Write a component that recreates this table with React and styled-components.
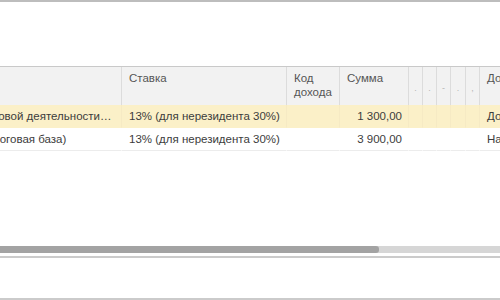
import React, {useLayoutEffect, useRef} from 'react'
import styled, {createGlobalStyle} from 'styled-components'

const GlobalStyle = createGlobalStyle`
  html, body {
    margin: 0;
    padding: 0;
    background: #fff;
  }
  body {
    font-family: 'Liberation Sans', Arial, sans-serif;
    font-size: 11.5px;
    color: #404040;
  }
`

const Page = styled.div`
  width: 500px;
  height: 300px;
  display: flex;
  flex-direction: column;
  overflow: hidden;
  border-top: 2px solid #bdbdbd;
  box-sizing: border-box;
`

const Toolbar = styled.div`
  height: 64px;
  flex: none;
`

const Viewport = styled.div`
  flex: 1;
  overflow-x: auto;
  overflow-y: hidden;
  scrollbar-width: none;
  &::-webkit-scrollbar {
    display: none;
  }
`

// widths of the tabular section columns, px
const columns = [262, 165, 53, 69, 14, 14, 14, 15, 14, 150]

const Grid = styled.div`
  display: grid;
  grid-template-columns: ${columns.map(w => `${w}px`).join(' ')};
  width: max-content;
  border-top: 1px solid #c9c9c9;
`

const HeadCell = styled.div`
  height: 38px;
  box-sizing: border-box;
  padding: 4px 6px 0 7px;
  background: #f2f2f2;
  border-right: 1px solid #dcdcdc;
  color: #555;
  line-height: 14px;
  overflow: hidden;
  text-align: ${p => (p.$center ? 'center' : 'left')};
  ${p => p.$center && 'padding: 14px 0 0; color: #b5b5b5; font-size: 9px;'}
`

const Cell = styled.div`
  height: 23px;
  box-sizing: border-box;
  padding: 0 6px 0 7px;
  line-height: 23px;
  white-space: nowrap;
  overflow: hidden;
  background: ${p => (p.$current ? '#fbf0c8' : '#fff')};
  border-right: 1px solid ${p => (p.$current ? '#f6eac4' : '#fff')};
  border-bottom: 1px solid ${p => (p.$current ? '#fbf0c8' : '#ececec')};
  text-align: ${p => (p.$right ? 'right' : 'left')};
  color: #3c3c3c;
`

const ScrollTrack = styled.div`
  height: 7px;
  flex: none;
  background: #d6d6d6;
  display: flex;
`

const ScrollThumb = styled.div`
  background: #a3a3a3;
  border-radius: 0 3px 3px 0;
`

const Footer = styled.div`
  flex: none;
  height: 40px;
  margin-top: 3px;
  border-top: 2px solid #cbcbcb;
  border-bottom: 2px solid #cbcbcb;
`

const header = [
  {text: 'Вид дохода'},
  {text: 'Ставка'},
  {text: ['Код', 'дохода']},
  {text: 'Сумма'},
  {text: '.', center: true},
  {text: '.', center: true},
  {text: '-', center: true},
  {text: '.', center: true},
  {text: ',', center: true},
  {text: 'Доход'}
]

const rows = [
  {
    kind: 'Прочие выплаты от трудовой деятельности…',
    rate: '13% (для нерезидента 30%)',
    code: '',
    sum: '1 300,00',
    note: 'Доход',
    current: true
  },
  {
    kind: 'Облагаемые суммы (налоговая база)',
    rate: '13% (для нерезидента 30%)',
    code: '',
    sum: '3 900,00',
    note: 'Налоговая база'
  }
]

const App = () => {
  const viewport = useRef(null)

  useLayoutEffect(() => {
    if (viewport.current) viewport.current.scrollLeft = 140
  }, [])

  return (
    <>
      <GlobalStyle />
      <Page>
        <Toolbar />
        <Viewport ref={viewport}>
          <Grid>
            {header.map((h, i) => (
              <HeadCell key={i} $center={h.center}>
                {Array.isArray(h.text) ? h.text.map(t => <div key={t}>{t}</div>) : h.text}
              </HeadCell>
            ))}
            {rows.map((r, i) => (
              <React.Fragment key={i}>
                <Cell $current={r.current}>{r.kind}</Cell>
                <Cell $current={r.current}>{r.rate}</Cell>
                <Cell $current={r.current}>{r.code}</Cell>
                <Cell $current={r.current} $right>
                  {r.sum}
                </Cell>
                <Cell $current={r.current} />
                <Cell $current={r.current} />
                <Cell $current={r.current} />
                <Cell $current={r.current} />
                <Cell $current={r.current} />
                <Cell $current={r.current}>{r.note}</Cell>
              </React.Fragment>
            ))}
          </Grid>
        </Viewport>
        <ScrollTrack>
          <ScrollThumb style={{width: 379}} />
        </ScrollTrack>
        <Footer />
      </Page>
    </>
  )
}

export default App
